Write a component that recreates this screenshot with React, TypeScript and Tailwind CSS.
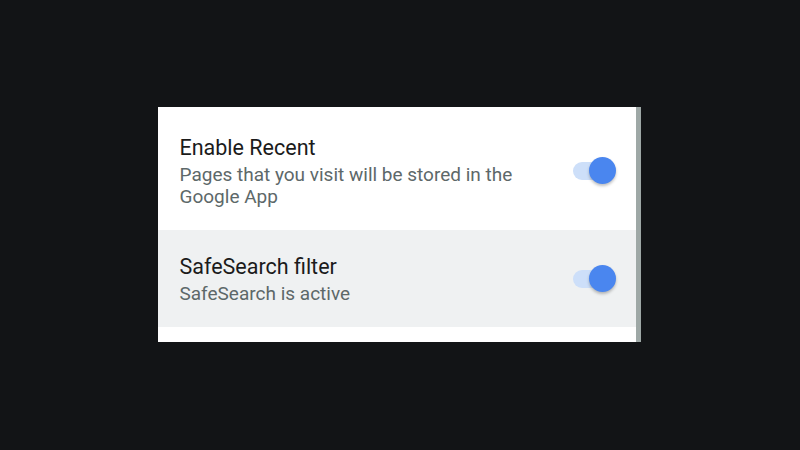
import { useState } from "react"

const rows = [
  {
    title: "Enable Recent",
    desc: "Pages that you visit will be stored in the Google App",
    shaded: false,
  },
  {
    title: "SafeSearch filter",
    desc: "SafeSearch is active",
    shaded: true,
  },
]

function Toggle({ on, onClick }: { on: boolean; onClick: () => void }) {
  return (
    <button onClick={onClick} className="relative w-[44px] h-[28px] shrink-0">
      <span
        className={`absolute left-0 top-[5px] w-[37px] h-[18px] rounded-full ${
          on ? "bg-[#cddff9]" : "bg-[#c8c8c8]"
        }`}
      />
      <span
        className={`absolute top-0 w-[27px] h-[27px] rounded-full shadow-[0_2px_3px_rgba(0,0,0,0.25)] ${
          on ? "left-[16px] bg-[#4a86ef]" : "left-0 bg-[#f5f5f5]"
        }`}
      />
    </button>
  )
}

export default function App() {
  const [state, setState] = useState([true, true])

  return (
    <div
      className="w-[800px] h-[450px] bg-[#121416] flex items-start justify-center pt-[107px]"
      style={{ fontFamily: "Roboto, 'Liberation Sans', sans-serif" }}
    >
      <div className="ml-[-2px] w-[483px] flex bg-white">
        <div className="flex-1 flex flex-col">
          {rows.map((row, i) => (
            <div
              key={row.title}
              className={`flex items-start pl-[22px] pr-[19px] ${
                row.shaded ? "bg-[#eff1f2] h-[97px] pt-[24px]" : "bg-white h-[123px] pt-[28px]"
              }`}
            >
              <div className="flex-1 pr-[40px]">
                <div className="text-[21.5px] leading-[26px] text-[#1b1b1b]">{row.title}</div>
                <div className="mt-[3px] text-[19px] leading-[22px] text-[#5d6869] max-w-[345px]">
                  {row.desc}
                </div>
              </div>
              <div className={row.shaded ? "mt-[11px]" : "mt-[22px]"}>
                <Toggle
                  on={state[i]}
                  onClick={() => setState((s) => s.map((v, j) => (j === i ? !v : v)))}
                />
              </div>
            </div>
          ))}
          <div className="h-[15px] bg-white" />
        </div>
        <div className="w-[5px] bg-[#9ea8a6]" />
      </div>
    </div>
  )
}
